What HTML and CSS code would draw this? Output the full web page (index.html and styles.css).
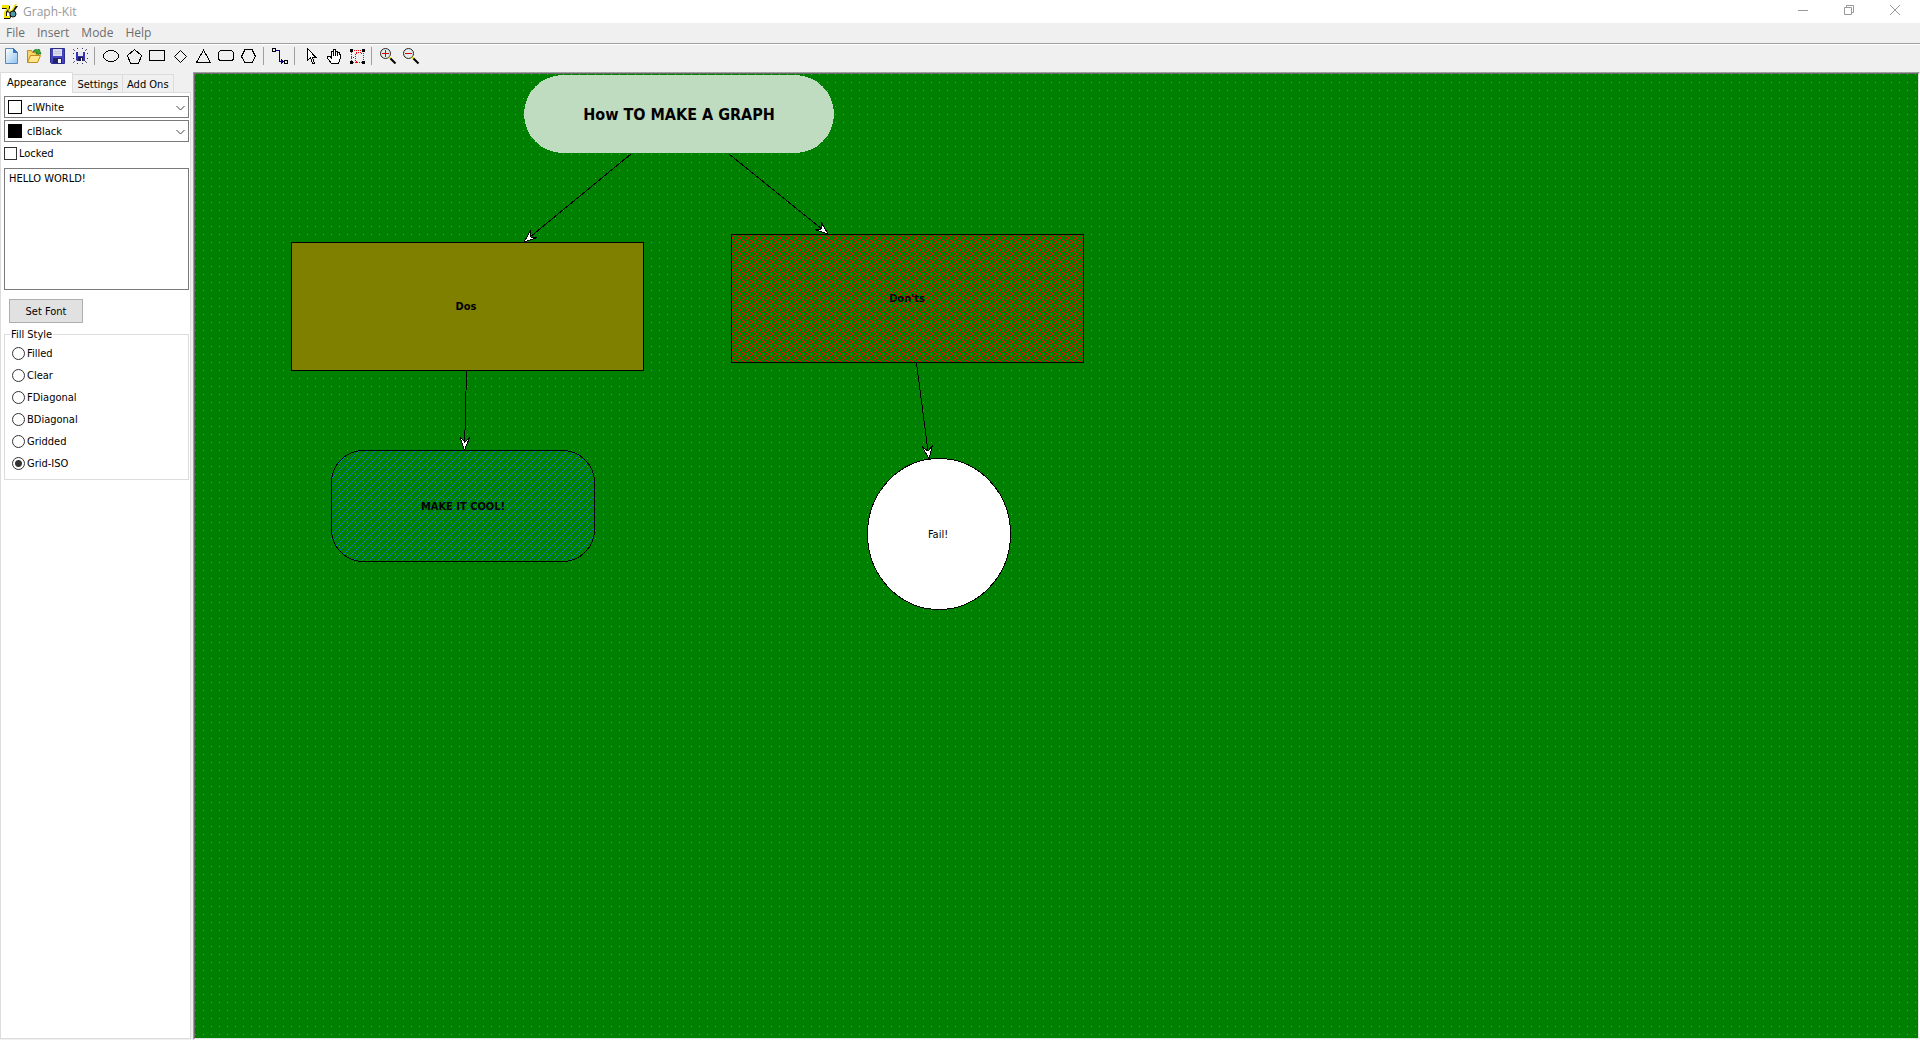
FILE: index.html
```html
<!DOCTYPE html>
<html lang="en">
  <head>
    <meta charset="UTF-8" />
    <title>Graph-Kit</title>
    <link rel="stylesheet" href="styles.css">
  </head>
  <body>
    <header class="titlebar">
      <svg class="app-icon" width="18" height="18" viewBox="0 0 18 18">
        <path d="M1 3h8v3l-3 4v6H3v-5l3-5H1z" fill="#111" />
        <path d="M1 2h7v3L5 9v6H3V9l3-4H1z" fill="#f5e400" />
        <path d="M8 7l2 2 4-6h3l-5 7-3 6H5v-2h3l1-3-2-2z" fill="#111" />
        <path d="M8 5l2 3 4-7h2l-5 8-2 1-2-3z" fill="#f5e400" />
        <circle cx="12" cy="11" r="3" fill="#4f9aa5" stroke="#111" />
        <path d="M4 13h5v2H4z" fill="#f5e400" />
      </svg>
      <span class="app-title">Graph-Kit</span>
      <div class="window-buttons">
        <button aria-label="Minimize">
          <svg width="10" height="10" viewBox="0 0 10 10"><path d="M0 5.500h10" /></svg>
        </button>
        <button aria-label="Restore">
          <svg width="10" height="10" viewBox="0 0 10 10"><path d="M.5 2.500h7v7h-7zM2.500 2.500v-2h7v7h-2" /></svg>
        </button>
        <button aria-label="Close">
          <svg width="10" height="10" viewBox="0 0 10 10"><path d="M0 0l10 10M10 0L0 10" /></svg>
        </button>
      </div>
    </header>

    <nav class="menubar">
      <button>File</button>
      <button>Insert</button>
      <button>Mode</button>
      <button>Help</button>
    </nav>

    <div class="toolbar">
      <button aria-label="New">
        <svg viewBox="0 0 23 22">
          <defs>
            <linearGradient id="paper" x1="0" y1="0" x2="1" y2="1">
              <stop offset="0" stop-color="#fff" />
              <stop offset="1" stop-color="#8fc4f0" />
            </linearGradient>
          </defs>
          <path d="M5.500 3.500h8l4 4v11h-12z" fill="url(#paper)" stroke="#5a86b8" />
          <path d="M13.500 3.500v4h4z" fill="#2f7fd0" stroke="#3a70b0" />
        </svg>
      </button>
      <button aria-label="Open">
        <svg viewBox="0 0 23 22">
          <path d="M4.500 17.500v-12h4l1 2h6v4" fill="#f6d66a" stroke="#c08a1c" />
          <path d="M4.500 17.500l3-7h10l-3 7z" fill="#ffe78c" stroke="#c08a1c" />
          <path d="M10 7c1-3 4-3 5-2l1-1 2 5h-5l1-2c-1-1-3-1-4 0z" fill="#35b035" stroke="#126012" stroke-width=".7" />
        </svg>
      </button>
      <button aria-label="Save">
        <svg viewBox="0 0 23 22">
          <path d="M4.500 3.500h14v15h-13l-1-1z" fill="#4343c4" stroke="#2d2d8c" />
          <path d="M7 4h9v7H7z" fill="#dcdcec" />
          <path d="M8 6.500h7M8 8.500h7" stroke="#c4c4d8" />
          <path d="M7 13h9v5H7z" fill="#25255c" />
          <path d="M12 14h3v4h-3z" fill="#f4f4ff" />
        </svg>
      </button>
      <button aria-label="Save as image">
        <svg viewBox="0 0 23 22">
          <path d="M7 7h9v9H8l-1-1z" fill="#3535b4" />
          <path d="M9 7h5v4H9z" fill="#e8e8f4" />
          <path d="M9 12h5v4H9z" fill="#1c1c50" />
          <path d="M12 13h1v3h-1z" fill="#fff" />
          <path d="M4 4l2 2M18 4l-2 2M4 18l2-2M18 18l-2-2" stroke="#333368" stroke-width=".8" />
          <path d="M8.500 3v1M13.500 3v1M8.500 18v1M13.500 18v1M4 8.500h1M4 13.500h1M18 8.500h1M18 13.500h1" stroke="#333368" />
        </svg>
      </button>
      <span class="separator"></span>
      <button aria-label="Ellipse">
        <svg class="line-icon" viewBox="0 0 23 22"><ellipse cx="11" cy="11" rx="7.500" ry="5.500" /></svg>
      </button>
      <button aria-label="Pentagon">
        <svg class="line-icon" viewBox="0 0 23 22"><path d="M11.500 4.500l7 6-3 8h-8l-3-8z" /></svg>
      </button>
      <button aria-label="Rectangle">
        <svg class="line-icon" viewBox="0 0 23 22"><path d="M3.500 5.500h15v10h-15z" /></svg>
      </button>
      <button aria-label="Diamond">
        <svg class="line-icon smooth" viewBox="0 0 23 22"><path d="M11.500 5.500l6 6-6 6-6-6z" /></svg>
      </button>
      <button aria-label="Triangle">
        <svg class="line-icon" viewBox="0 0 23 22"><path d="M11.500 5l7 12.500h-14z" /></svg>
      </button>
      <button aria-label="Rounded rectangle">
        <svg class="line-icon" viewBox="0 0 23 22"><rect x="3.500" y="5.500" width="15" height="10" rx="3" /></svg>
      </button>
      <button aria-label="Hexagon">
        <svg class="line-icon" viewBox="0 0 23 22"><path d="M3.500 11.500l3.500-7h7l3.500 7-3.500 6H7z" /></svg>
      </button>
      <span class="separator"></span>
      <button aria-label="Link">
        <svg class="line-icon" viewBox="0 0 23 22">
          <path d="M3.500 3.500h3v3h-3zM15.500 15.500h3v3h-3z" />
          <path class="navy" d="M7 5.500h3.500v11H15" />
          <path class="navy-fill" d="M12 13.500l3 3-3 3z" />
        </svg>
      </button>
      <span class="separator"></span>
      <button aria-label="Select">
        <svg class="line-icon" viewBox="0 0 23 22">
          <path class="white-fill" d="M7.500 3.500v12l3-2.500 2 5h2l-2-5.500h3.500z" />
        </svg>
      </button>
      <button aria-label="Pan">
        <svg class="line-icon" viewBox="0 0 23 22">
          <path class="white-fill" d="M8.500 18.500l-4-5.500v-2h2l2 2V6h2V4.500h2V6h2v1h2v2c2 0 1 4 0 6l-1 3.500z" />
          <path d="M10.500 6v5M12.500 6v5M14.500 7v4" />
        </svg>
      </button>
      <button aria-label="Select area">
        <svg class="line-icon" viewBox="0 0 23 22">
          <path class="red-dots" d="M5.500 5.500h12v12h-12z" />
          <path class="red-dots" d="M5 12.500h4M9.500 12V9l2-2h3l2 2M9.500 13v3l2 2" />
          <path class="black-fill" d="M4 4h3v3H4zM16 4h3v3h-3zM4 16h3v3H4zM16 16h3v3h-3z" />
        </svg>
      </button>
      <span class="separator"></span>
      <button aria-label="Zoom in">
        <svg viewBox="0 0 23 22">
          <circle cx="8.500" cy="8.500" r="5" fill="#e4ecec" stroke="#222" />
          <path d="M5 8.500h7M8.500 5v7" stroke="#e00000" />
          <path d="M12 12l2 2" stroke="#e8d800" stroke-width="2" />
          <path d="M13.500 13.500l5 5" stroke="#000" stroke-width="2" />
        </svg>
      </button>
      <button aria-label="Zoom out">
        <svg viewBox="0 0 23 22">
          <circle cx="8.500" cy="8.500" r="5" fill="#e4ecec" stroke="#222" />
          <path d="M5 8.500h7" stroke="#e00000" />
          <path d="M12 12l2 2" stroke="#e8d800" stroke-width="2" />
          <path d="M13.500 13.500l5 5" stroke="#000" stroke-width="2" />
        </svg>
      </button>
    </div>

    <main class="workspace">
      <aside class="sidebar">
        <div class="tabs" role="tablist">
          <button class="tab active" role="tab" aria-selected="true">Appearance</button>
          <button class="tab" role="tab">Settings</button>
          <button class="tab" role="tab">Add Ons</button>
        </div>

        <div class="tab-page">
          <div class="color-box">
            <span class="swatch white"></span>
            <select aria-label="Fill color">
              <option>clWhite</option>
              <option>clBlack</option>
            </select>
            <svg class="chevron" width="9" height="6" viewBox="0 0 9 6"><path d="M.5 1l4 4 4-4" /></svg>
          </div>
          <div class="color-box">
            <span class="swatch black"></span>
            <select aria-label="Line color">
              <option>clBlack</option>
              <option>clWhite</option>
            </select>
            <svg class="chevron" width="9" height="6" viewBox="0 0 9 6"><path d="M.5 1l4 4 4-4" /></svg>
          </div>

          <label class="check-row"><input type="checkbox" />Locked</label>

          <textarea class="caption" aria-label="Caption">HELLO WORLD!</textarea>

          <button class="font-button">Set Font</button>

          <fieldset class="fill-style">
            <legend>Fill Style</legend>
            <label><input type="radio" name="fill" />Filled</label>
            <label><input type="radio" name="fill" />Clear</label>
            <label><input type="radio" name="fill" />FDiagonal</label>
            <label><input type="radio" name="fill" />BDiagonal</label>
            <label><input type="radio" name="fill" />Gridded</label>
            <label><input type="radio" name="fill" checked />Grid-ISO</label>
          </fieldset>
        </div>
      </aside>

      <section class="canvas">
        <svg class="graph" width="100%" height="100%">
          <defs>
            <pattern id="dots" width="8" height="8" patternUnits="userSpaceOnUse">
              <path d="M0 0h1v1H0z" fill="#808080" />
            </pattern>
            <pattern id="bdiagonal" width="8" height="8" patternUnits="userSpaceOnUse">
              <path d="M4 0h1v1h-1zM3 1h1v1h-1zM2 2h1v1h-1zM1 3h1v1h-1zM0 4h1v1h-1zM7 5h1v1h-1zM6 6h1v1h-1zM5 7h1v1h-1z" fill="#0078d7" />
            </pattern>
            <pattern id="gridiso" width="8" height="8" patternUnits="userSpaceOnUse">
              <path d="M4 0h1v1h-1zM3 1h1v1h-1zM2 2h1v1h-1zM1 3h1v1h-1zM0 4h1v1h-1zM7 5h1v1h-1zM6 6h1v1h-1zM5 7h1v1h-1z" fill="#f00" />
              <path d="M5 0h1v1h-1zM6 1h1v1h-1zM7 2h1v1h-1zM0 3h1v1h-1zM1 4h1v1h-1zM2 5h1v1h-1zM3 6h1v1h-1zM4 7h1v1h-1z" fill="#f00" />
            </pattern>
            <marker id="arrow" markerUnits="userSpaceOnUse" markerWidth="16" markerHeight="14" refX="14" refY="7" orient="auto">
              <path d="M14 7L1 2l5 5-5 5z" fill="#fff" stroke="#000" />
            </marker>
          </defs>

          <rect width="100%" height="100%" fill="url(#dots)" />

          <!-- links -->
          <g class="links">
            <path d="M436 80L329 168" />
            <path d="M534 80L633 160" />
            <path d="M271.500 297L269.500 376" />
            <path d="M721.500 289L734 385" />
          </g>

          <!-- nodes -->
          <rect x="329" y="1" width="310" height="78" rx="39" fill="#c0dcc0" />
          <rect class="node" x="96.500" y="168.500" width="352" height="128" fill="#808000" />
          <rect class="node" x="536.500" y="160.500" width="352" height="128" fill="url(#gridiso)" />
          <rect class="node" x="136.500" y="376.500" width="263" height="111" rx="32" fill="url(#bdiagonal)" />
          <ellipse class="node" cx="744" cy="460" rx="71.500" ry="75.500" fill="#fff" />

          <!-- captions -->
          <text class="heading" x="484" y="46">How TO MAKE A GRAPH</text>
          <text class="bold" x="271" y="236">Dos</text>
          <text class="bold" x="712" y="228">Don'ts</text>
          <text class="bold" x="268" y="436">MAKE IT COOL!</text>
          <text x="743" y="464">Fail!</text>
        </svg>
      </section>
    </main>
  </body>
</html>
```

FILE: styles.css
```css
* {
  box-sizing: border-box;
}

body {
  margin: 0;
  height: 100vh;
  display: flex;
  flex-direction: column;
  background: #f0f0f0;
  color: #000;
  font-family: "DejaVu Sans Condensed", Tahoma, sans-serif;
  font-size: 11px;
  overflow: hidden;
}

button,
select,
textarea {
  font: inherit;
  color: inherit;
  border-radius: 0;
}

/* Title bar */
.titlebar {
  display: flex;
  align-items: center;
  height: 23px;
  padding: 0 2px 0 1px;
  background: #fff;
  font-family: "Open Sans", "Segoe UI", sans-serif;
  font-size: 12px;
  color: #999;
}

.app-title {
  margin-left: 4px;
}

.window-buttons {
  display: flex;
  margin-left: auto;
}

.window-buttons button {
  display: flex;
  align-items: center;
  justify-content: center;
  width: 46px;
  height: 23px;
  padding: 0 0 3px;
  border: none;
  background: none;
}

.window-buttons path {
  fill: none;
  stroke: #999;
}

/* Menu */
.menubar {
  display: flex;
  height: 21px;
  border-bottom: 1px solid #a0a0a0;
}

.menubar button {
  padding: 0 6px 1px;
  border: none;
  background: none;
  font-family: "Open Sans", "Segoe UI", sans-serif;
  font-size: 12px;
  color: #6d6d6d;
}

/* Toolbar */
.toolbar {
  display: flex;
  height: 28px;
  border-top: 1px solid #fff;
}

.toolbar button {
  width: 23px;
  height: 22px;
  padding: 0;
  border: none;
  background: none;
}

.toolbar svg {
  display: block;
  width: 23px;
  height: 22px;
}

.separator {
  width: 8px;
  height: 18px;
  margin-top: 2px;
  background: linear-gradient(#a0a0a0, #a0a0a0) 2px 0 / 1px 100% no-repeat;
}

.line-icon {
  fill: none;
  stroke: #000;
  shape-rendering: crispEdges;
}

.line-icon.smooth {
  shape-rendering: auto;
}

.line-icon .navy {
  stroke: #000080;
}

.line-icon .navy-fill {
  fill: #000080;
  stroke: none;
}

.line-icon .white-fill {
  fill: #fff;
}

.line-icon .black-fill {
  fill: #000;
  stroke: none;
}

.line-icon .red-dots {
  stroke: #f00;
  stroke-dasharray: 1 1;
}

/* Sidebar */
.workspace {
  flex: 1;
  display: flex;
  min-height: 0;
}

.sidebar {
  display: flex;
  flex-direction: column;
  width: 193px;
  padding: 0 2px 1px 0;
}

.tabs {
  display: flex;
  align-items: flex-end;
  height: 20px;
}

.tab {
  height: 18px;
  padding: 1px 4px 0;
  border: 1px solid #dcdcdc;
  border-left: none;
  border-bottom: none;
  background: #f0f0f0;
}

.tab.active {
  z-index: 1;
  height: 21px;
  margin-bottom: -1px;
  padding: 0 6px 2px;
  border-left: 1px solid #dcdcdc;
  background: #fff;
}

.tab-page {
  flex: 1;
  padding: 3px 1px 3px 3px;
  border: 1px solid #dcdcdc;
  background: #fff;
}

.color-box {
  position: relative;
  height: 22px;
  margin-bottom: 2px;
}

.color-box select {
  width: 100%;
  height: 22px;
  padding: 0 22px;
  border: 1px solid #7a7a7a;
  background: #fff;
  appearance: none;
}

.swatch {
  position: absolute;
  left: 4px;
  top: 4px;
  width: 14px;
  height: 14px;
  border: 1px solid #000;
}

.swatch.white {
  background: #fff;
}

.swatch.black {
  background: #000;
}

.chevron {
  position: absolute;
  right: 4px;
  top: 9px;
  fill: none;
  stroke: #444;
}

.check-row {
  display: flex;
  align-items: center;
  gap: 2px;
  height: 18px;
}

input {
  appearance: none;
  width: 13px;
  height: 13px;
  margin: 0;
  border: 1px solid #333;
  background: #fff;
}

.caption {
  display: block;
  width: 100%;
  height: 122px;
  margin: 6px 0 9px;
  padding: 3px 4px;
  border: 1px solid #7a7a7a;
  resize: none;
}

.font-button {
  display: block;
  width: 74px;
  height: 24px;
  margin-left: 5px;
  border: 1px solid #adadad;
  background: #e1e1e1;
}

.fill-style {
  margin: 5px 0 0;
  padding: 1px 7px 5px;
  border: 1px solid #dcdcdc;
}

.fill-style legend {
  margin-left: -2px;
  padding: 0 1px;
}

.fill-style label {
  display: flex;
  align-items: center;
  gap: 2px;
  height: 22px;
}

.fill-style input {
  border-radius: 50%;
}

.fill-style input:checked {
  background: radial-gradient(circle, #333 3px, #fff 4px);
}

/* Drawing area */
.canvas {
  flex: 1;
  border: 1px solid;
  border-color: #a0a0a0 #fff #fff #a0a0a0;
}

.graph {
  display: block;
  border: 1px solid;
  border-color: #696969 #e3e3e3 #e3e3e3 #696969;
  background: #008000;
  shape-rendering: crispEdges;
}

.links path {
  fill: none;
  stroke: #000;
  marker-end: url(#arrow);
}

.node {
  stroke: #000;
}

.graph text {
  font-size: 11px;
  text-anchor: middle;
}

.graph .bold {
  font-weight: bold;
}

.graph .heading {
  font-size: 16px;
  font-weight: bold;
}
```
